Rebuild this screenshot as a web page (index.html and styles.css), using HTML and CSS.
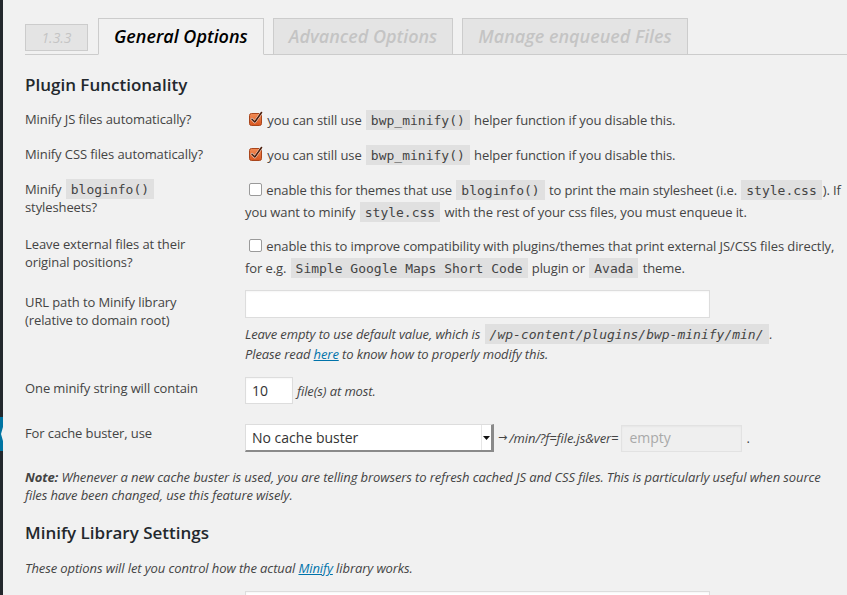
FILE: index.html
```html
<!DOCTYPE html>
<html>
<head>
<meta charset="utf-8">
<link rel="stylesheet" href="styles.css">
</head>
<body>
<div class="menu-strip"><div class="menu-active"><span class="menu-arrow"></span></div></div>
<main class="wrap">
  <nav class="tabs">
    <span class="version">1.3.3</span>
    <a class="tab active">General Options</a>
    <a class="tab">Advanced Options</a>
    <a class="tab">Manage enqueued Files</a>
  </nav>

  <h3 class="section-title first">Plugin Functionality</h3>

  <div class="form">
    <div class="row r1">
      <div class="label">Minify JS files automatically?</div>
      <div class="field"><span class="cb checked"><svg viewBox="0 0 16 16" width="16" height="16"><defs><linearGradient id="og" x1="0" y1="0" x2="0" y2="1"><stop offset="0" stop-color="#f28c55"/><stop offset="1" stop-color="#d7551f"/></linearGradient></defs><rect x="1.5" y="3.5" width="12" height="12" rx="2" fill="url(#og)" stroke="#a9461c"/><path d="M4 9.2 L6.8 12 L13.5 2.5" fill="none" stroke="#fff" stroke-width="2.6" stroke-linecap="round" stroke-linejoin="round" opacity="0.85"/><path d="M4 9.2 L6.8 12 L13.5 2.5" fill="none" stroke="#4a1d0b" stroke-width="1.6" stroke-linecap="round" stroke-linejoin="round"/></svg></span> you can still use <code>bwp_minify()</code> helper function if you disable this.</div>
    </div>
    <div class="row r2">
      <div class="label">Minify CSS files automatically?</div>
      <div class="field"><span class="cb checked"><svg viewBox="0 0 16 16" width="16" height="16"><rect x="1.5" y="3.5" width="12" height="12" rx="2" fill="url(#og)" stroke="#a9461c"/><path d="M4 9.2 L6.8 12 L13.5 2.5" fill="none" stroke="#fff" stroke-width="2.6" stroke-linecap="round" stroke-linejoin="round" opacity="0.85"/><path d="M4 9.2 L6.8 12 L13.5 2.5" fill="none" stroke="#4a1d0b" stroke-width="1.6" stroke-linecap="round" stroke-linejoin="round"/></svg></span> you can still use <code>bwp_minify()</code> helper function if you disable this.</div>
    </div>
    <div class="row r3">
      <div class="label">Minify <code>bloginfo()</code> stylesheets?</div>
      <div class="field"><span class="cb"></span> enable this for themes that use <code>bloginfo()</code> to print the main stylesheet (i.e. <code>style.css</code>). If you want to minify <code>style.css</code> with the rest of your css files, you must enqueue it.</div>
    </div>
    <div class="row r4">
      <div class="label">Leave external files at their original positions?</div>
      <div class="field"><span class="cb"></span> enable this to improve compatibility with plugins/themes that print external JS/CSS files directly, for e.g. <code>Simple Google Maps Short Code</code> plugin or <code>Avada</code> theme.</div>
    </div>
    <div class="row r5">
      <div class="label">URL path to Minify library (relative to domain root)</div>
      <div class="field">
        <div class="input wide"></div>
        <p class="desc">Leave empty to use default value, which is <code>/wp-content/plugins/bwp-minify/min/</code>.<br>Please read <a href="#" class="link">here</a> to know how to properly modify this.</p>
      </div>
    </div>
    <div class="row r6">
      <div class="label">One minify string will contain</div>
      <div class="field inline"><div class="input small">10</div><em class="after">file(s) at most.</em></div>
    </div>
    <div class="row r7">
      <div class="label">For cache buster, use</div>
      <div class="field inline">
        <div class="select">No cache buster<span class="select-btn"><svg width="7" height="4" viewBox="0 0 7 4"><path d="M0 0H7L3.5 4Z" fill="#111"/></svg></span></div>
        <span class="arrow">→</span><em class="after path">/min/?f=file.js&amp;ver=</em>
        <div class="input disabled">empty</div><span class="dot">.</span>
      </div>
    </div>
  </div>

  <p class="note"><strong>Note:</strong> Whenever a new cache buster is used, you are telling browsers to refresh cached JS and CSS files. This is particularly useful when source files have been changed, use this feature wisely.</p>

  <h3 class="section-title second">Minify Library Settings</h3>
  <p class="intro">These options will let you control how the actual <a href="#" class="link">Minify</a> library works.</p>
  <div class="row r8">
    <div class="label"></div>
    <div class="field"><div class="input wide"></div></div>
  </div>
</main>
</body>
</html>
```
FILE: styles.css
```css
html, body {
  margin: 0;
  height: 595px;
  overflow: hidden;
}
body {
  display: flex;
  background: #f1f1f1;
  font-family: "Open Sans", "DejaVu Sans", sans-serif;
  font-size: 13px;
  color: #444;
  letter-spacing: -0.1px;
}
.menu-strip {
  flex: none;
  width: 3px;
  background: #23282d;
}
.menu-active {
  position: relative;
  margin-top: 417px;
  height: 34px;
  background: #0074a2;
}
.menu-arrow {
  position: absolute;
  right: 0;
  top: 10px;
  width: 0;
  height: 0;
  border-top: 7px solid transparent;
  border-bottom: 7px solid transparent;
  border-right: 2px solid #f1f1f1;
}
.wrap {
  flex: 1;
  padding-left: 22px;
}

/* tabs */
.tabs {
  display: flex;
  align-items: flex-end;
  margin-top: 17px;
  border-bottom: 1px solid #ccc;
  height: 37px;
  letter-spacing: 0;
}
.version {
  box-sizing: border-box;
  width: 63px;
  height: 27px;
  margin-bottom: 3px;
  border: 1px solid #ccc;
  background: #e4e4e4;
  color: #c4c4c4;
  font-style: italic;
  font-size: 14px;
  line-height: 25px;
  text-align: center;
}
.tab {
  box-sizing: border-box;
  height: 37px;
  margin-left: 10px;
  margin-bottom: -1px;
  padding: 0 15px;
  border: 1px solid #ccc;
  background: #e4e4e4;
  color: #c4c4c4;
  font-size: 18px;
  font-style: italic;
  font-weight: 600;
  line-height: 35px;
  text-decoration: none;
}
.tab + .tab { margin-left: 9px; }
.tab.active {
  background: #f1f1f1;
  border-bottom-color: #f1f1f1;
  color: #000;
}

.section-title {
  margin: 0;
  font-size: 17px;
  font-weight: 600;
  line-height: 23px;
  color: #23282d;
  letter-spacing: 0;
}
.section-title.first { margin-top: 18px; }
.section-title.second { margin-top: 17px; }

/* rows */
.row {
  display: grid;
  grid-template-columns: 220px 602px;
}
.label {
  line-height: 18px;
  padding-top: 1px;
  padding-right: 22px;
}
.field {
  line-height: 22px;
}
.r1 { margin-top: 13px; }
.r2 { margin-top: 13px; }
.r3 { margin-top: 13px; }
.r4 { margin-top: 12px; }
.r4 .label { padding-top: 0; }
.r5 { margin-top: 11px; }
.r5 .label { padding-top: 3px; }
.r6 { margin-top: 13px; }
.r6 .label { padding-top: 2px; }
.r7 { margin-top: 20px; }
.r7 .label { padding-top: 0; }
.r8 { margin-top: 14px; }

code {
  font-family: "DejaVu Sans Mono", monospace;
  font-size: 13px;
  line-height: 1;
  letter-spacing: 0;
  padding: 3px 5px 2px;
  margin: 0 1px;
  background: rgba(0, 0, 0, 0.07);
}

.cb {
  display: inline-block;
  box-sizing: border-box;
  width: 13px;
  height: 13px;
  margin: 0 1px 0 4px;
  vertical-align: -1px;
  border: 1px solid #9a9a9a;
  border-radius: 2px;
  background: #fff;
}
.cb.checked {
  position: relative;
  border: 0;
  background: none;
  width: 14px;
}
.cb.checked svg {
  position: absolute;
  left: -1px;
  top: -3px;
}

.input {
  box-sizing: border-box;
  height: 28px;
  border: 1px solid #ddd;
  background: #fff;
  box-shadow: inset 0 1px 2px rgba(0, 0, 0, 0.04);
  font-size: 14px;
  line-height: 26px;
  padding: 0 7px;
  color: #333;
  letter-spacing: 0;
}
.input.wide { width: 465px; }
.input.small { width: 48px; height: 27px; line-height: 25px; padding-left: 6px; }
.input.disabled {
  width: 121px;
  height: 27px;
  line-height: 24px;
  background: #efefef;
  border-color: #e2e2e2;
  color: #a9a9a9;
  margin-left: 3px;
}
.desc {
  margin: 6px 0 0;
  font-style: italic;
  line-height: 20px;
}
.link { color: #0073aa; }

.field.inline {
  display: flex;
  align-items: center;
}
.after {
  margin-left: 4px;
}
.select {
  box-sizing: border-box;
  position: relative;
  width: 249px;
  height: 28px;
  border: 1px solid #ddd;
  border-right: 3px solid #8a8a8a;
  border-bottom: 2px solid #8a8a8a;
  background: #fff;
  font-size: 14px;
  color: #333;
  line-height: 26px;
  padding-left: 6px;
  letter-spacing: 0;
}
.select-btn {
  position: absolute;
  right: 0;
  top: 0;
  bottom: 0;
  width: 9px;
  border-left: 1px solid #e6e6e6;
  display: flex;
  align-items: center;
  justify-content: center;
}
.arrow {
  margin-left: 4px;
  font-family: "DejaVu Sans", sans-serif;
  font-size: 11px;
  color: #444;
}
.after.path { margin-left: 2px; }
.dot { margin-left: 4px; }

.note {
  width: 810px;
  margin: 16px 0 0;
  line-height: 18px;
  font-style: italic;
  letter-spacing: -0.1px;
}
.intro {
  margin: 15px 0 0;
  line-height: 18px;
  font-style: italic;
}
```
